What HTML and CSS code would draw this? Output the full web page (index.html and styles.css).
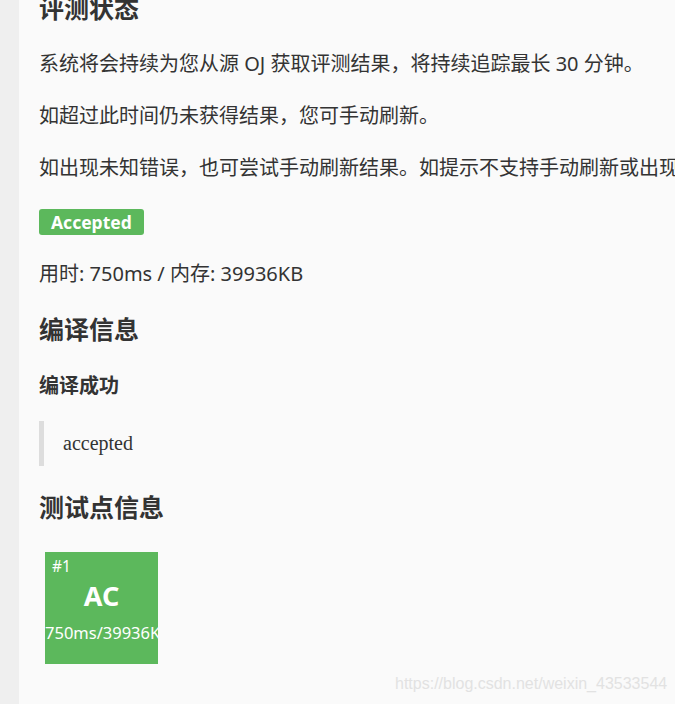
FILE: index.html
```html
<!DOCTYPE html>
<html lang="zh-CN">
    <head>
        <meta charset="utf-8">
        <link rel="stylesheet" href="styles.css">
    </head>
    <body>
        <div class="page">
            <div class="content">
                <h2 class="first">评测状态</h2>
                <p class="para-first">系统将会持续为您从源 OJ 获取评测结果，将持续追踪最长 30 分钟。</p>
                <p>如超过此时间仍未获得结果，您可手动刷新。</p>
                <p>如出现未知错误，也可尝试手动刷新结果。如提示不支持手动刷新或出现其他问题，请联系管理员。</p>
                <div class="status">
                    <span class="label">Accepted</span>
                </div>
                <p class="usage">用时: 750ms / 内存: 39936KB</p>

                <h2>编译信息</h2>
                <h4>编译成功</h4>
                <blockquote>accepted</blockquote>

                <h2>测试点信息</h2>
                <div class="cases">
                    <div class="case">
                        <div class="case-id">#1</div>
                        <div class="case-result">AC</div>
                        <div class="case-usage">750ms/39936KB</div>
                    </div>
                </div>
            </div>
        </div>
        <div class="watermark">https://blog.csdn.net/weixin_43533544</div>
    </body>
</html>
```

FILE: styles.css
```css
* {
    box-sizing: border-box;
}

html, body {
    margin: 0;
    height: 100%;
    overflow: hidden;
}

body {
    background-color: #efefef;
    font-family: "Noto Sans", "Noto Sans CJK SC", sans-serif;
    font-size: 20px;
    color: #333333;
}

.page {
    display: flow-root;
    margin-left: 19px;
    min-height: 100%;
    background-color: #fafafa;
}

.content {
    padding-left: 20px;
    white-space: nowrap;
}

h2 {
    font-size: 25px;
    font-weight: bold;
    line-height: 34px;
    margin: 24px 0 0;
}
h2.first {
    margin-top: -9px;
}

p {
    line-height: 28px;
    margin: 24px 0 0;
}
p.para-first {
    margin-top: 25px;
}

.status {
    margin-top: 26px;
    height: 26px;
}
.label {
    display: inline-block;
    background-color: #5cb85c;
    color: #ffffff;
    font-weight: bold;
    font-size: 17.5px;
    line-height: 26px;
    height: 26px;
    padding: 0 12px;
    border-radius: 3px;
}

p.usage {
    margin-top: 26px;
}

h4 {
    font-size: 20px;
    font-weight: bold;
    line-height: 28px;
    margin: 26px 0 0;
}

blockquote {
    margin: 21px 0 0;
    height: 45px;
    line-height: 45px;
    padding-left: 19px;
    border-left: 5px solid #dddddd;
    font-family: "Liberation Serif", "DejaVu Serif", serif;
    font-size: 20px;
}

.cases {
    margin-top: 28px;
    padding-left: 6px;
}
.case {
    width: 113px;
    height: 112px;
    background-color: #5cb85c;
    color: #ffffff;
    overflow: hidden;
    text-align: center;
}
.case-id {
    text-align: left;
    padding: 4px 0 0 7px;
    font-size: 15.5px;
    line-height: 20px;
}
.case-result {
    font-size: 27px;
    font-weight: bold;
    line-height: 34px;
    margin-top: 3px;
}
.case-usage {
    font-size: 16.5px;
    line-height: 24px;
    margin-top: 8px;
}

.watermark {
    position: absolute;
    left: 395px;
    top: 675px;
    font-family: "Liberation Sans", Arial, sans-serif;
    font-size: 16px;
    color: #e2e2e2;
}
```
